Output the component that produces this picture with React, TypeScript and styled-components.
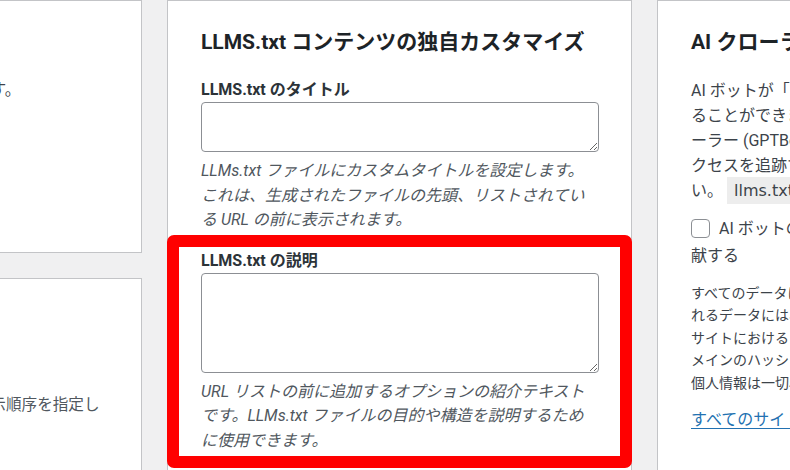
import React from "react";
import styled, { createGlobalStyle } from "styled-components";

const GlobalStyle = createGlobalStyle`
  html, body {
    margin: 0;
    padding: 0;
    background: #f0f0f1;
    width: 790px;
    height: 470px;
    overflow: hidden;
  }
  body {
    font-family: Roboto, "Noto Sans CJK JP", "Noto Sans", sans-serif;
    font-size: 16px;
    color: #3c434a;
  }
  * { box-sizing: border-box; }
`;

const Page = styled.div`
  display: grid;
  grid-template-columns: 465px 465px 465px;
  column-gap: 25px;
  align-items: start;
  margin-left: -323px;
`;

const Column = styled.div`
  display: flex;
  flex-direction: column;
  gap: 25px;
`;

const Card = styled.section<{ $height?: number }>`
  position: relative;
  background: #fff;
  border: 1px solid #c3c4c7;
  padding: 27px 33px;
  height: ${(p) => (p.$height ? `${p.$height}px` : "auto")};
  min-height: ${(p) => (p.$height ? "0" : "520px")};
`;

const Heading = styled.h2`
  margin: 0 0 21px;
  font-size: 21px;
  line-height: 29px;
  font-weight: 700;
  color: #1d2327;
  white-space: nowrap;
`;

const Label = styled.label<{ $top?: number }>`
  display: block;
  font-size: 16px;
  line-height: 24px;
  font-weight: 700;
  color: #2c3338;
  margin-top: ${(p) => p.$top ?? 0}px;
`;

const TextArea = styled.textarea<{ $h: number }>`
  display: block;
  width: 398px;
  height: ${(p) => p.$h}px;
  margin: 0;
  border: 1px solid #8c8f94;
  border-radius: 4px;
  background: #fff;
  font: inherit;
  padding: 2px 6px;
`;

const Description = styled.p`
  margin: 7px 0 0;
  font-size: 16px;
  line-height: 24.5px;
  font-style: italic;
  color: #50575e;
`;

const Text = styled.p<{ $top?: number; $lh?: number; $size?: number }>`
  margin: ${(p) => p.$top ?? 0}px 0 0;
  font-size: ${(p) => p.$size ?? 16}px;
  line-height: ${(p) => p.$lh ?? 24}px;
  color: #3c434a;
  white-space: nowrap;
`;

const WrapText = styled.p<{ $top?: number }>`
  margin: ${(p) => p.$top ?? 0}px 0 0;
  font-size: 15.6px;
  line-height: 24px;
  color: #50575e;
`;

const Code = styled.code`
  font-family: "DejaVu Sans", sans-serif;
  font-size: 16px;
  background: rgba(0, 0, 0, 0.07);
  padding: 4px 7px 4px 7px;
  margin-left: 4px;
`;

const CheckRow = styled.label`
  display: block;
  margin-top: 12px;
  font-size: 16px;
  line-height: 27px;
  color: #3c434a;
  white-space: nowrap;
`;

const Checkbox = styled.input`
  appearance: none;
  width: 19px;
  height: 19px;
  margin: 0 9px 0 0;
  border: 1px solid #8c8f94;
  border-radius: 4px;
  background: #fff;
  vertical-align: -4px;
`;

const Link = styled.a`
  display: inline-block;
  margin-top: 14px;
  font-size: 16px;
  line-height: 24px;
  color: #2271b1;
  text-decoration: underline;
  text-underline-offset: 3px;
`;

const Highlight = styled.div`
  position: absolute;
  left: -1px;
  right: -1px;
  top: 234px;
  height: 233px;
  border: 12px solid #ff0000;
  border-radius: 7px;
  pointer-events: none;
`;

export default function App() {
  return (
    <>
      <GlobalStyle />
      <Page>
        <Column>
          <Card $height={253}>
            <Heading>基本設定</Heading>
            <Text>サイトの LLMS.txt ファイルを生成します。</Text>
          </Card>
          <Card>
            <Heading>表示順序</Heading>
            <Label>並び順</Label>
            <WrapText $top={13}>
              /llms.txt に含める投稿タイプと、その表示順序を指定します。
            </WrapText>
          </Card>
        </Column>

        <Card>
          <Heading>LLMS.txt コンテンツの独自カスタマイズ</Heading>
          <Label>LLMS.txt のタイトル</Label>
          <TextArea $h={50} />
          <Description>
            LLMs.txt ファイルにカスタムタイトルを設定します。これは、生成されたファイルの先頭、リストされている URL の前に表示されます。
          </Description>
          <Label $top={16}>LLMS.txt の説明</Label>
          <TextArea $h={100} />
          <Description>
            URL リストの前に追加するオプションの紹介テキストです。LLMs.txt ファイルの目的や構造を説明するために使用できます。
          </Description>
          <Highlight />
        </Card>

        <Card>
          <Heading>AI クローラーのアクセス追跡</Heading>
          <Text $lh={25}>
            AI ボットが「llms.txt」にアクセスした回数を記録す
            <br />
            ることができます。ChatGPT などの AI クロ
            <br />
            ーラー (GPTBot、ClaudeBot など) によるア
            <br />
            クセスを追跡するには、以下を有効にしてくださ
            <br />
            い。<Code>llms.txt</Code>
          </Text>
          <CheckRow>
            <Checkbox type="checkbox" />
            AI ボットのアクセス統計を匿名で共有し、改善に貢
            <br />
            献する
          </CheckRow>
          <Text $top={13} $size={14} $lh={22.4}>
            すべてのデータは匿名化されて送信されます。送信さ
            <br />
            れるデータには、AI ボットの種類、アクセス日時、
            <br />
            サイトにおけるアクセス回数、およびサイトのド
            <br />
            メインのハッシュ値のみが含まれます。
            <br />
            個人情報は一切収集されません。
          </Text>
          <Link href="#">すべてのサイトの統計を見る</Link>
        </Card>
      </Page>
    </>
  );
}
